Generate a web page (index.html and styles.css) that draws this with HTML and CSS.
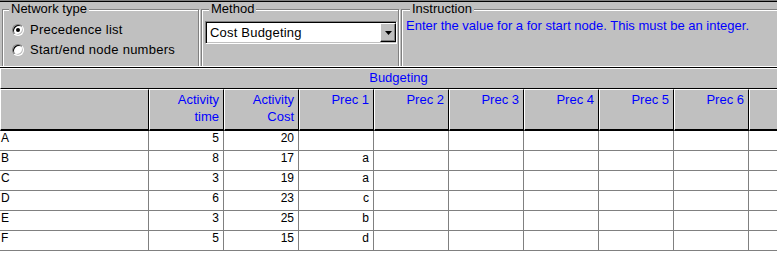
FILE: index.html
```html
<!DOCTYPE html>
<html>
<head>
<meta charset="utf-8">
<link rel="stylesheet" href="styles.css">
</head>
<body>
<div class="panel">
  <div class="group g-network">
    <span class="legend">Network type</span>
    <div class="radios">
      <label class="radio-row"><span class="radio checked"></span>Precedence list</label>
      <label class="radio-row"><span class="radio"></span>Start/end node numbers</label>
    </div>
  </div>
  <div class="group g-method">
    <span class="legend">Method</span>
    <div class="combo">
      <span class="combo-text">Cost Budgeting</span>
      <span class="combo-btn"><svg width="7" height="4" viewBox="0 0 7 4"><polygon points="0,0 7,0 3.5,4" fill="#000"/></svg></span>
    </div>
  </div>
  <div class="group g-instr">
    <span class="legend">Instruction</span>
    <p class="instr">Enter the value for a for start node. This must be an integer.</p>
  </div>
</div>
<div class="grid">
  <div class="band">Budgeting</div>
  <div class="hcell"></div>
  <div class="hcell">Activity<br>time</div>
  <div class="hcell">Activity<br>Cost</div>
  <div class="hcell">Prec 1</div>
  <div class="hcell">Prec 2</div>
  <div class="hcell">Prec 3</div>
  <div class="hcell">Prec 4</div>
  <div class="hcell">Prec 5</div>
  <div class="hcell">Prec 6</div>
  <div class="hcell"></div>

  <div class="cell name">A</div><div class="cell">5</div><div class="cell">20</div><div class="cell"></div><div class="cell"></div><div class="cell"></div><div class="cell"></div><div class="cell"></div><div class="cell"></div><div class="cell"></div>
  <div class="cell name">B</div><div class="cell">8</div><div class="cell">17</div><div class="cell">a</div><div class="cell"></div><div class="cell"></div><div class="cell"></div><div class="cell"></div><div class="cell"></div><div class="cell"></div>
  <div class="cell name">C</div><div class="cell">3</div><div class="cell">19</div><div class="cell">a</div><div class="cell"></div><div class="cell"></div><div class="cell"></div><div class="cell"></div><div class="cell"></div><div class="cell"></div>
  <div class="cell name">D</div><div class="cell">6</div><div class="cell">23</div><div class="cell">c</div><div class="cell"></div><div class="cell"></div><div class="cell"></div><div class="cell"></div><div class="cell"></div><div class="cell"></div>
  <div class="cell name">E</div><div class="cell">3</div><div class="cell">25</div><div class="cell">b</div><div class="cell"></div><div class="cell"></div><div class="cell"></div><div class="cell"></div><div class="cell"></div><div class="cell"></div>
  <div class="cell name">F</div><div class="cell">5</div><div class="cell">15</div><div class="cell">d</div><div class="cell"></div><div class="cell"></div><div class="cell"></div><div class="cell"></div><div class="cell"></div><div class="cell"></div>
</div>
</body>
</html>
```
FILE: styles.css
```css
* { box-sizing: border-box; }
html, body {
  margin: 0;
  padding: 0;
  background: #fff;
  font-family: "Liberation Sans", Arial, sans-serif;
  font-size: 13px;
  color: #000;
  overflow: hidden;
}
.panel {
  display: flex;
  gap: 2px;
  height: 67px;
  padding: 8px 0 0 2px;
  background: #c0c0c0;
  border-top: 1px solid #808080;
  border-bottom: 1px solid #fff;
  box-shadow: inset 0 1px 0 #000;
  overflow: hidden;
}
.group {
  position: relative;
  height: 70px;
  border: 1px solid #808080;
  box-shadow: inset 1px 1px 0 #fff, 1px 1px 0 #fff;
  flex: none;
}
.g-network { width: 197px; }
.g-method { width: 198px; }
.g-instr { flex: 1; margin-right: -4px; }
.legend {
  position: absolute;
  top: -8px;
  left: 6px;
  padding: 0 2px;
  line-height: 14px;
  background: #c0c0c0;
  white-space: nowrap;
}
.g-method .legend { left: 7px; }
.g-instr .legend { left: 8px; }
.radios {
  display: flex;
  flex-direction: column;
  padding: 10px 0 0 9px;
  letter-spacing: 0.25px;
}
.radio-row {
  display: flex;
  align-items: center;
  gap: 6px;
  height: 20px;
  line-height: 14px;
}
.radio {
  position: relative;
  width: 12px;
  height: 12px;
  border-radius: 50%;
  border: 1px solid;
  border-color: #808080 #fff #fff #808080;
  box-shadow: inset 1px 1px 0 #000, inset -1px -1px 0 #c0c0c0;
  background: #fff;
  flex: none;
}
.radio.checked::after {
  content: "";
  position: absolute;
  left: 3px;
  top: 3px;
  width: 4px;
  height: 4px;
  border-radius: 50%;
  background: #000;
}
.combo {
  display: flex;
  align-items: center;
  justify-content: space-between;
  width: 192px;
  height: 23px;
  margin: 11px 0 0 3px;
  border: 1px solid;
  border-color: #808080 #fff #fff #808080;
  box-shadow: inset 1px 1px 0 #000, inset -1px -1px 0 #c0c0c0;
  background: #fff;
}
.combo-text {
  padding: 1px 0 0 4px;
  line-height: 14px;
  letter-spacing: 0.2px;
}
.combo-btn {
  display: flex;
  align-items: center;
  justify-content: center;
  width: 16px;
  height: 19px;
  background: #c0c0c0;
  border: 1px solid;
  border-color: #fff #000 #000 #fff;
  box-shadow: inset -1px -1px 0 #808080;
  align-self: flex-end;
  margin-bottom: 1px;
}
.combo-btn svg { display: block; margin-top: 1px; }
.instr {
  margin: 0;
  padding: 9px 0 0 4px;
  color: #0000ff;
  line-height: 14px;
  white-space: nowrap;
}
.grid {
  display: grid;
  grid-template-columns: 149px repeat(8, 75px) 40px;
  border-top: 1px solid #000;
}
.band {
  grid-column: 1 / -1;
  height: 21px;
  background: #c0c0c0;
  border-top: 1px solid #fff;
  border-left: 1px solid #fff;
  border-bottom: 1px solid #000;
  color: #0000ff;
  line-height: 17px;
  padding-left: 7px;
  text-align: center;
}
.hcell {
  height: 42px;
  background: #c0c0c0;
  border-top: 1px solid #fff;
  border-left: 1px solid #fff;
  border-right: 1px solid #000;
  border-bottom: 2px solid #000;
  color: #0000ff;
  text-align: right;
  line-height: 17px;
  padding: 1px 4px 0 0;
}
.cell {
  height: 20px;
  border-right: 1px solid #808080;
  border-bottom: 1px solid #808080;
  font-size: 12px;
  line-height: 14px;
  text-align: right;
  padding: 0 4px 0 0;
}
.cell.name {
  text-align: left;
  padding: 0 0 0 1px;
}
```
